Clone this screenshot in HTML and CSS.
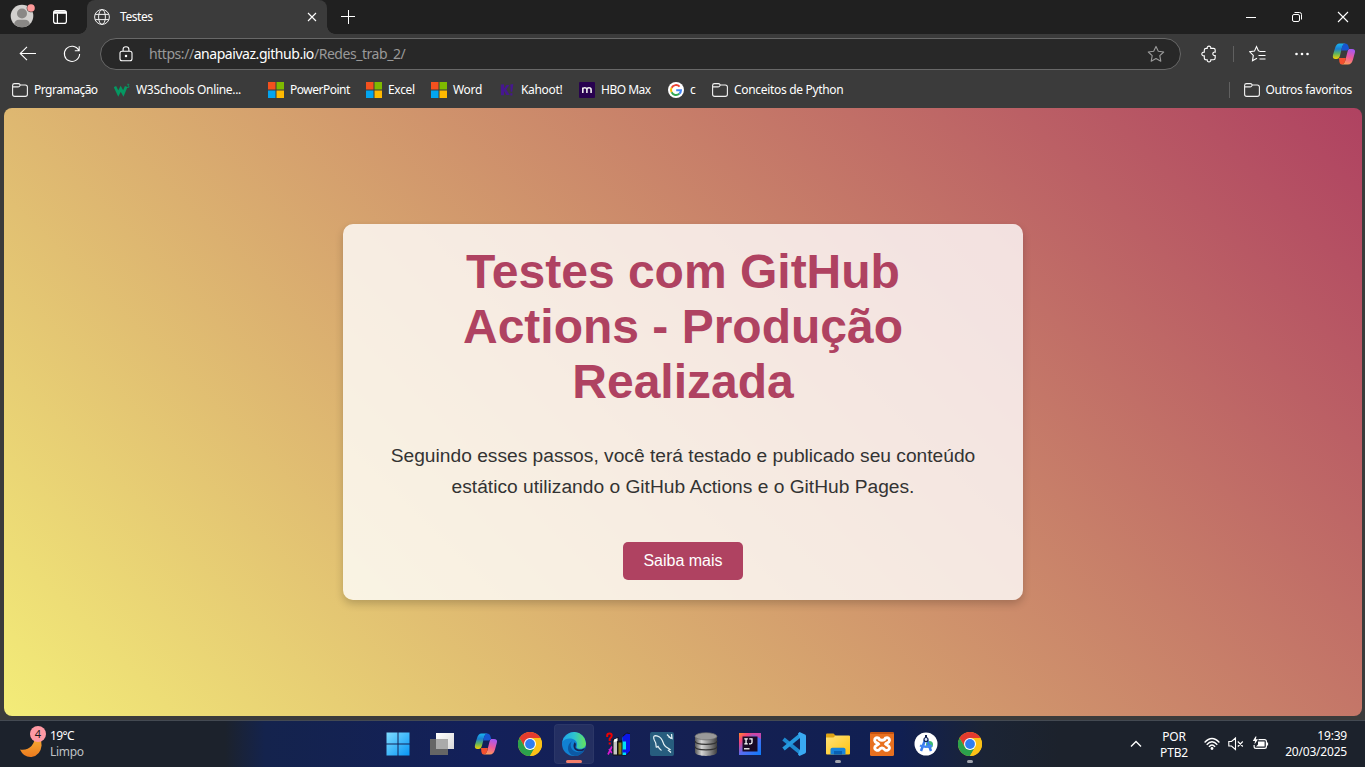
FILE: index.html
```html
<!DOCTYPE html>
<html lang="pt-BR">
<head>
<meta charset="utf-8">
<title>Testes</title>
<link rel="stylesheet" href="styles.css">
</head>
<body>
<svg class="defs" width="0" height="0" aria-hidden="true">
  <defs>
    <linearGradient id="cpA" x1="0" y1="0" x2="0" y2="1"><stop offset="0" stop-color="#19b5f1"/><stop offset=".35" stop-color="#1c7fd0"/><stop offset=".65" stop-color="#5fb35e"/><stop offset="1" stop-color="#f5d000"/></linearGradient>
    <linearGradient id="cpB" x1=".6" y1="0" x2=".3" y2="1"><stop offset="0" stop-color="#a758f0"/><stop offset=".5" stop-color="#ee5a9a"/><stop offset="1" stop-color="#ff9d55"/></linearGradient>
    <linearGradient id="winG" x1="0" y1="0" x2="1" y2="1"><stop offset="0" stop-color="#7fdcff"/><stop offset="1" stop-color="#0796f5"/></linearGradient>
    <linearGradient id="edgeA" x1="0" y1=".3" x2="1" y2=".3"><stop offset="0" stop-color="#1fa5e8"/><stop offset=".5" stop-color="#2dc3d0"/><stop offset="1" stop-color="#65e35a"/></linearGradient>
    <linearGradient id="moonG" x1="0" y1="0" x2="0" y2="1"><stop offset="0" stop-color="#fbbd3c"/><stop offset="1" stop-color="#ec7a1e"/></linearGradient>
    <linearGradient id="dbG" x1="0" y1="0" x2="1" y2="0"><stop offset="0" stop-color="#555"/><stop offset=".3" stop-color="#d4d4d4"/><stop offset=".65" stop-color="#8d8d8d"/><stop offset="1" stop-color="#3f3f3f"/></linearGradient>
    <linearGradient id="ijG" x1="0" y1="0" x2="1" y2="1"><stop offset="0" stop-color="#ff8a2a"/><stop offset=".22" stop-color="#f4407c"/><stop offset=".5" stop-color="#5a6cf0"/><stop offset="1" stop-color="#087cfa"/></linearGradient>
    <linearGradient id="folG" x1="0" y1="0" x2="1" y2="1"><stop offset="0" stop-color="#ffe27a"/><stop offset="1" stop-color="#ffc30f"/></linearGradient>
    <linearGradient id="tvG" x1="0" y1="0" x2="1" y2="1"><stop offset="0" stop-color="#fff"/><stop offset="1" stop-color="#d9d9d9"/></linearGradient>
    <symbol id="folder" viewBox="0 0 16 16"><path d="M.6 4.200V3.500Q.6 1.600 2.500 1.600H6.400Q7.300 1.600 7.900 2.400L8.400 3H13.300Q15.400 3 15.400 5.100V12.200Q15.400 14.400 13.200 14.400H2.800Q.6 14.400.6 12.200V4.900H6Q6.900 4.900 7.400 4.300L8.400 3" fill="none" stroke="#f2f2f2" stroke-width="1.100"/></symbol>
    <symbol id="tiles" viewBox="0 0 16 16"><path fill="#f4511e" d="M0 0h7.500v7.500H0z"/><path fill="#7fba00" d="M8.500 0H16v7.500H8.500z"/><path fill="#03a5f0" d="M0 8.500h7.500V16H0z"/><path fill="#ffb901" d="M8.500 8.500H16V16H8.500z"/></symbol>
    <symbol id="copilot" viewBox="0 0 24 24"><path fill="url(#cpB)" d="M17 7H20Q23.800 7 22.900 10.500L21 17.500Q19.600 22.500 16 22.500H9.500Q12.300 22 13.300 18.500L15.300 10.500Q16 7 17 7Z"/><path fill="#f4502e" d="M7 16H13.900L13.300 18.500Q12.300 22.500 9.500 22.500 8 22.500 7.400 20Z"/><path fill="url(#cpA)" d="M7.500 1.500H13.500Q11 2 10 5.500L8 13.500Q7.200 17 4.500 17H3.500Q.1 17 1 13L2.900 6.500Q4.300 1.500 7.500 1.500Z"/><path fill="#1754d0" d="M13 1.500Q15.800 1.500 16.500 4.500L17.200 7Q15.800 7 15.400 8.500H9.300L10 5.500Q11 1.500 13 1.500Z"/></symbol>
    <symbol id="chrome" viewBox="0 0 24 24"><circle cx="12" cy="12" r="12" fill="#fbc116"/><path fill="#e33b2e" d="M1.600 6A12 12 0 0 1 22.400 6H12L6.800 15Z"/><path fill="#2ba24c" d="M1.600 6A12 12 0 0 0 12 24L17.200 15 12 18 6.800 15Z"/><path fill="#fbc116" d="M22.400 6A12 12 0 0 1 12 24L17.200 15 18 12 12 6Z"/><circle cx="12" cy="12" r="6" fill="#fff"/><circle cx="12" cy="12" r="4.900" fill="#2f7df0"/></symbol>
  </defs>
</svg>
<div class="screen">
  <header class="tabstrip">
    <svg class="avatar" width="26" height="26" viewBox="0 0 26 26"><circle cx="12" cy="13" r="11.300" fill="#d2d0ce"/><circle cx="12" cy="10.500" r="5" fill="#8a8886"/><path d="M4.200 21.200Q4.600 16.700 9 16.700H15Q19.400 16.700 19.800 21.200A11.300 11.300 0 0 1 4.200 21.200Z" fill="#8a8886"/><circle cx="21" cy="5" r="4.300" fill="#202020"/><circle cx="21" cy="5" r="3.800" fill="#ff9a9a"/></svg>
    <svg class="workspace" width="14" height="14" viewBox="0 0 14 14" fill="none" stroke="#fff" stroke-width="1.200"><rect x=".6" y=".6" width="12.800" height="12.800" rx="2.200"/><path d="M1 2.500H13" stroke-width="2.600"/><path d="M4.400 4V13"/></svg>
    <div class="tab">
      <svg width="16" height="16" viewBox="0 0 16 16" fill="none" stroke="#f2f2f2"><circle cx="8" cy="8" r="7.400"/><ellipse cx="8" cy="8" rx="3.400" ry="7.400"/><path d="M1.200 5.400H14.800M1.200 10.600H14.800"/></svg>
      <span class="tab-title">Testes</span>
      <svg width="10" height="10" viewBox="0 0 10 10" fill="none" stroke="#fff" stroke-width="1.100"><path d="M1 1 9 9M9 1 1 9"/></svg>
    </div>
    <svg class="plus" width="14" height="14" viewBox="0 0 14 14" stroke="#fff"><path d="M7.500 0V14M0 6.500H14"/></svg>
    <div class="winbtns">
      <svg width="12" height="12" viewBox="0 0 12 12" stroke="#fff"><path d="M1 6.500H11"/></svg>
      <svg width="12" height="12" viewBox="0 0 12 12" fill="none" stroke="#fff"><rect x="1.500" y="3.500" width="7" height="7" rx="1.500"/><path d="M3.500 1.500H8.500Q10.500 1.500 10.500 3.500V8.500"/></svg>
      <svg width="12" height="12" viewBox="0 0 12 12" fill="none" stroke="#fff" stroke-width="1.100"><path d="M1 1 11 11M11 1 1 11"/></svg>
    </div>
  </header>
  <div class="toolbar">
    <svg class="back" width="18" height="16" viewBox="0 0 18 16" fill="none" stroke="#fff" stroke-width="1.100"><path d="M17 7.500H1.200M8 .8 1.200 7.500 8 14.200"/></svg>
    <svg class="reload" width="18" height="18" viewBox="0 0 18 18" fill="none" stroke="#fff" stroke-width="1.100"><path d="M15.700 5.200A7.600 7.600 0 1 0 16.600 9M16.200 1.300V5.700H11.800"/></svg>
    <div class="address">
      <svg width="14" height="16" viewBox="0 0 14 16" fill="none" stroke="#fff" stroke-width="1.100"><rect x="1" y="5.200" width="12" height="9.600" rx="2"/><path d="M4.100 5V3.400Q4.100.8 7 .8T9.900 3.400V5"/><circle cx="7" cy="10" r=".7" fill="#fff"/></svg>
      <span class="url">https://<b>anapaivaz.github.io</b>/Redes_trab_2/</span>
      <svg width="18" height="18" viewBox="0 0 18 18" fill="none" stroke="#9b9b9b" stroke-width="1.100"><path d="M9 1.400 11.300 6.300 16.700 7 12.800 10.700 13.800 16.200 9 13.500 4.200 16.200 5.200 10.700 1.300 7 6.700 6.300Z" stroke-linejoin="round"/></svg>
    </div>
    <div class="tools">
      <svg width="18" height="18" viewBox="0 0 18 18" fill="none" stroke="#fff" stroke-width="1.100"><path d="M6.300 3.400H7.200C6.800.3 11.200.3 10.800 3.400H13.500Q15.200 3.400 15.200 5V7.100C12 6.500 12 11.100 15.200 10.600V13Q15.200 14.700 13.500 14.700H10.800C11.200 17.700 6.800 17.700 7.200 14.700H6Q4.300 14.700 4.300 13V10.800C1 11.200 1 6.800 4.300 7.100V5Q4.300 3.400 6.300 3.400Z"/></svg>
      <i class="divider"></i>
      <svg width="18" height="18" viewBox="0 0 18 18" fill="none" stroke="#fff" stroke-width="1.100"><path d="M10.500 6 9.400 5.800 7.500 1.600 5.500 6.100.8 6.800 4.300 10.400 3.500 15.800 8 13.200M10.500 6.500H16.500M9.500 10.500H16.500M10.500 14H16.500"/></svg>
      <svg width="16" height="16" viewBox="0 0 16 16" fill="#fff"><circle cx="2.500" cy="8" r="1.300"/><circle cx="8" cy="8" r="1.300"/><circle cx="13.500" cy="8" r="1.300"/></svg>
      <svg width="24" height="24"><use href="#copilot"/></svg>
    </div>
  </div>
  <nav class="bookmarks">
    <div class="bm"><svg><use href="#folder"/></svg><span class="tight">Prgramação</span></div>
    <div class="bm"><svg viewBox="0 0 16 16" fill="none" stroke="#059862"><path d="M.9 4.500 4.300 11.500 6.700 6.800 9.300 11.500 12.200 4.500" stroke-width="2.800"/><path d="M13.200 2.300H15L14 3.700Q15.600 4 14.800 5.300L13.100 5.500" stroke-width=".9"/></svg><span>W3Schools Online...</span></div>
    <div class="bm"><svg><use href="#tiles"/></svg><span class="tight">PowerPoint</span></div>
    <div class="bm"><svg><use href="#tiles"/></svg><span>Excel</span></div>
    <div class="bm"><svg><use href="#tiles"/></svg><span>Word</span></div>
    <div class="bm"><svg viewBox="0 0 16 16" fill="#46178f"><path d="M1.800 2.500 5 2.300V6.600L7.600 3H10.300L7.200 7.500 10.800 13H7.400L5 9V13.200H2ZM11.300 2.500 14.300 2 13.200 9.700H11.700ZM11.300 11.200H13.400V13.500H11.300Z"/></svg><span>Kahoot!</span></div>
    <div class="bm"><svg viewBox="0 0 16 16"><rect width="16" height="16" rx="1" fill="#28024f"/><path d="M3.800 11V5.500M3.800 7.500Q3.800 5.700 5.800 5.700T7.900 7.700V11M7.900 7.700Q7.900 5.700 10 5.700T12.100 7.700V11" fill="none" stroke="#eee" stroke-width="1.600"/></svg><span class="tight">HBO Max</span></div>
    <div class="bm"><svg viewBox="0 0 16 16" fill="none" stroke-width="2"><circle cx="8" cy="8" r="8" fill="#fff"/><path stroke="#ea4335" d="M3.600 5.700A5 5 0 0 1 11.600 4.600"/><path stroke="#fbbc05" d="M3.600 5.700A5 5 0 0 0 3.600 10.300"/><path stroke="#34a853" d="M3.600 10.300A5 5 0 0 0 11.300 11.800"/><path stroke="#4285f4" d="M11.300 11.800A5 5 0 0 0 13 8.200H8.200"/></svg><span>c</span></div>
    <div class="bm"><svg><use href="#folder"/></svg><span>Conceitos de Python</span></div>
    <div class="bm others"><i class="divider"></i><svg><use href="#folder"/></svg><span>Outros favoritos</span></div>
  </nav>
  <main class="page">
    <section class="card">
      <h1>Testes com GitHub Actions - Produção Realizada</h1>
      <p>Seguindo esses passos, você terá testado e publicado seu conteúdo estático utilizando o GitHub Actions e o GitHub Pages.</p>
      <a class="more">Saiba mais</a>
    </section>
  </main>
  <footer class="taskbar">
    <div class="weather">
      <svg width="28" height="30" viewBox="0 0 28 30"><path d="M1 20.500Q8.500 21.500 12.500 17 17 12 15.500 3 23 8 22.600 16.500 21.500 26.500 12.500 28 4.500 28.500 1 20.500Z" fill="url(#moonG)"/></svg>
      <span class="badge">4</span>
      <div class="wtext"><span class="temp">19°C</span><span class="cond">Limpo</span></div>
    </div>
    <div class="apps">
      <div class="app"><svg viewBox="0 0 24 24"><path fill="url(#winG)" d="M.5.5H11.500V11.500H.5ZM12.500.5H23.500V11.500H12.500ZM.5 12.500H11.500V23.500H.5ZM12.500 12.500H23.500V23.500H12.500Z"/></svg></div>
      <div class="app"><svg viewBox="0 0 24 24"><path fill="url(#tvG)" d="M6 1H24V17H6Z"/><path fill="#656565" d="M0 7H18V23H0Z"/><path fill="#aaa" d="M6 7H18V17H6Z"/></svg></div>
      <div class="app"><svg><use href="#copilot"/></svg></div>
      <div class="app"><svg><use href="#chrome"/></svg></div>
      <div class="app active"><svg viewBox="0 0 24 24"><circle cx="12" cy="12" r="12" fill="#1181d2"/><path fill="url(#edgeA)" d="M.2 10A12 12 0 0 1 24 11.500C24 16 19.500 17.500 16 16.500 13.500 15.600 15.500 14.500 15 11.500 14 6 4.500 4.500.2 10Z"/><path fill="#0c59a4" d="M10.800 8.600C7.500 11 7.500 18.500 14.500 20 18 20.500 20.500 19.500 22.300 18 20 22 16.500 24 13 24 5 23 3.500 13 10.800 8.600Z"/><path fill="#142355" d="M12.500 10.300C15.500 12.500 12.500 14.500 14 16.200 16.500 18.300 20.500 17.600 23 16L22.400 18C17.500 21.500 8.500 18 12.500 10.300Z"/></svg><i class="bar"></i></div>
      <div class="app"><svg viewBox="0 0 24 24"><path d="M1.200 5V3.500Q1.200 1.500 3.500 1.500T5.700 3.700Q5.700 5 3.700 6.800V9" fill="none" stroke="#f00000" stroke-width="2"/><path fill="#f00000" d="M2.700 10.500H4.800V12.500H2.700Z"/><path d="M2 22.500 6 14.500M3 17 6 21" stroke="#d819cf" stroke-width="1.700"/><path fill="#111" d="M6.500 7.500 12.500 5V9L17 8V3.500L21 .5 24 1.500V20L20 23.500H7L6.500 22Z"/><path fill="#c5c5c5" d="M7.500 8.500H11V22.500H7.500Z"/><path fill="#fff" d="M8 7.500 11.500 6V9L8 10Z"/><path fill="#8a811a" d="M12.500 10.500H15.500V22.500H12.500Z"/><path fill="#00e1f5" d="M16.500 5.500H20V23H16.500Z"/><path fill="#0a16e8" d="M16.500 5 20.500 1.500 24 2V19L20 23V9.500H16.500ZM16.500 17.500H20V20.500H16.500Z"/></svg></div>
      <div class="app"><svg viewBox="0 0 24 24" fill="none" stroke="#e5f1f5"><rect width="24" height="24" rx="2" fill="#275d7e" stroke="none"/><path d="M6.300 15.500Q6.500 11 4.300 8 2.500 4 5.500 3.700 10 4 12.300 8.500 13.800 13 15.500 14.500L20 17.500 18.500 18.300 21 20.500M6.300 15.500 8 14.300Q9.500 17.500 11.500 18.500" stroke-width="1.200"/><path d="M17 2.500 21 6.500M21.500 2 22 6.500 18.500 5" stroke-width="1.300"/></svg></div>
      <div class="app"><svg viewBox="0 0 24 24"><path fill="url(#dbG)" d="M1 4V20C1 25.200 23 25.200 23 20V4Z"/><path d="M1 9C1 13.500 23 13.500 23 9M1 14.500C1 19 23 19 23 14.500" fill="none" stroke="#333" stroke-width="1.300"/><ellipse cx="12" cy="4.300" rx="11" ry="3.600" fill="#999" stroke="#686868" stroke-width=".7"/></svg></div>
      <div class="app"><svg viewBox="0 0 24 24"><rect x="1" y="1" width="22" height="22" fill="url(#ijG)"/><path fill="#e83b98" d="M13 1H23V7L19 4.500Z" opacity=".75"/><rect x="4.500" y="4.500" width="15" height="15" fill="#180a24"/><path d="M6.300 6.800H9.800M8.050 6.800V11.800M6.300 11.800H9.800M11.300 6.800H14V10.300Q14 11.800 12.600 11.800H11" fill="none" stroke="#fff" stroke-width="1.300"/><path fill="#ddd" d="M6 16H11.500V17.500H6Z"/></svg></div>
      <div class="app"><svg viewBox="0 0 24 24"><path d="M1.500 7 18 20.500" stroke="#1e89d0" stroke-width="3.800"/><path d="M1.500 17 18 3.500" stroke="#2599df" stroke-width="3.800"/><path fill="#39a9f2" d="M17.500 0 23 2.600Q24 3 24 4.200V19.800Q24 21 23 21.500L17.500 24 16 22.500 18 17.200V6.800L16 1.500Z"/></svg></div>
      <div class="app"><svg viewBox="0 0 24 24"><path fill="#dea314" d="M0 2.500Q0 1.500 1 1.500H7.500L10 4V8H0Z"/><path fill="url(#folG)" d="M0 5.500H7.500L9.500 3.500H23Q24 3.500 24 4.500V21.500Q24 22.500 23 22.500H1Q0 22.500 0 21.500Z"/><path fill="#1784db" d="M4.500 22.500V17.500Q4.500 15.700 6.300 15.700H17.700Q19.500 15.700 19.500 17.500V22.500Z"/><path fill="#0961b4" d="M8 19H16V22.500H8Z"/></svg><i class="dot"></i></div>
      <div class="app"><svg viewBox="0 0 24 24"><rect width="24" height="24" rx="1.500" fill="#e8701f"/><path fill="#c65310" d="M1 0H23L24 2H0Z"/><path d="M8.500 6C6.500 5 4.500 6 4.700 8.500 5 11 7.500 10.500 8.500 12 7 13.500 4.500 13.500 4.700 16 5 18.500 7.500 18.800 9 18 10 16.500 11 16 12 16S14 16.500 15 18C16.500 18.800 19.300 18.500 19.500 16 19.500 13.500 17 13.500 15.700 12 16.500 10.500 19.300 11 19.500 8.500 19.500 6 17.500 5 15.500 6 14.500 9 9.500 9 8.500 6Z" fill="none" stroke="#fff" stroke-width="2.900"/></svg></div>
      <div class="app"><svg viewBox="0 0 24 24"><circle cx="12" cy="12" r="11.500" fill="#fff"/><circle cx="15.500" cy="12.500" r="3.500" fill="#3bba71"/><path d="M11.200 7.500 7 19M12.800 7.500 17 19" stroke="#3979ea" stroke-width="2.500"/><path d="M6 13.500Q12 16 18 13.500" fill="none" stroke="#4285f4" stroke-width="2.400"/><circle cx="12" cy="7.500" r="2" fill="#d8e5ff" stroke="#10204f" stroke-width="1.200"/><path d="M12 3V5.500" stroke="#10204f" stroke-width="2"/></svg></div>
      <div class="app"><svg><use href="#chrome"/></svg><i class="dot"></i></div>
    </div>
    <div class="tray">
      <svg width="12" height="8" viewBox="0 0 12 8" fill="none" stroke="#fff" stroke-width="1.400"><path d="M1 6.500 6 1.500 11 6.500"/></svg>
      <div class="lang"><span>POR</span><span>PTB2</span></div>
      <div class="status">
        <svg width="16" height="16" viewBox="0 0 16 16" fill="none" stroke="#fff" stroke-width="1.300"><path d="M.6 6.500Q8-1.500 15.400 6.500M2.700 8.700Q8 2.800 13.300 8.700M4.900 10.800Q8 7.200 11.100 10.800"/><circle cx="8" cy="12.500" r="1.400" fill="#fff" stroke="none"/></svg>
        <svg width="16" height="16" viewBox="0 0 16 16" fill="none" stroke="#fff" stroke-width="1.100"><path d="M.8 5.500H3.500L7.500 2V13.500L3.500 10H.8ZM9.800 5.500 14.800 10.500M14.800 5.500 9.800 10.500"/></svg>
        <svg width="17" height="16" viewBox="0 0 17 16" fill="none" stroke="#fff" stroke-width="1.200"><path d="M6.500 3.600H12.500Q14.400 3.600 14.400 5.500V10.500Q14.400 12.400 12.500 12.400H4Q2.100 12.400 2.100 10.500V9"/><path d="M6 5.500H12.600V10.500H4L6 8.500Z" fill="#fff" stroke="none"/><path d="M15.500 6.500V9.500"/><path d="M3.500.5H4.500L3.800 3.200H6L2.500 8.500 3 5H.8Z" fill="#fff" stroke="none"/></svg>
      </div>
      <div class="clock"><span>19:39</span><span>20/03/2025</span></div>
    </div>
  </footer>
</div>
</body>
</html>
```

FILE: styles.css
```css
* { box-sizing: border-box; }
body { margin: 0; font-family: "Noto Sans", "Open Sans", sans-serif; font-size: 12px; color: #fff; overflow: hidden; }
svg { display: block; flex: none; }
.defs { position: absolute; }
.screen { width: 1365px; height: 767px; display: flex; flex-direction: column; background: #3b3b3b; }
span { white-space: nowrap; }

.tabstrip { height: 34px; flex: none; display: flex; align-items: center; background: #202020; padding-left: 10px; }
.workspace { margin-left: 17px; }
.avatar { margin-top: -2px; }
.tab { position: relative; width: 240px; height: 34px; margin-left: 20px; padding: 0 10px 0 7px; display: flex; align-items: center; background: #3b3b3b; border-radius: 8px 8px 0 0; }
.tab::before, .tab::after { content: ""; position: absolute; bottom: 0; width: 8px; height: 8px; }
.tab::before { left: -8px; background: radial-gradient(circle at 0 0, #202020 7.5px, #3b3b3b 8px); }
.tab::after { right: -8px; background: radial-gradient(circle at 100% 0, #202020 7.5px, #3b3b3b 8px); }
.tab-title { flex: 1; margin-left: 10px; padding-bottom: 1px; letter-spacing: -.45px; }
.plus { margin-left: 14px; }
.winbtns { margin-left: auto; display: flex; gap: 34px; padding-right: 16px; }

.toolbar { height: 40px; flex: none; display: flex; align-items: center; padding-left: 19px; }
.reload { margin-left: 26px; }
.address { width: 1081px; height: 32px; margin-left: 19px; padding: 0 15px 0 18px; border: 1px solid #686868; border-radius: 16px; background: #282828; display: flex; align-items: center; }
.url { flex: 1; margin-left: 16px; padding-bottom: 1px; font-size: 14px; letter-spacing: -.45px; color: #999; }
.url b { font-weight: 400; color: #fff; }
.tools { display: flex; align-items: center; margin-left: 19px; }
.divider { width: 1px; height: 16px; background: #606060; }
.tools .divider { margin: 0 15px; }
.tools svg:nth-of-type(3) { margin: 0 22px 0 27px; }

.bookmarks { height: 34px; flex: none; display: grid; grid-template-columns: 102px 154px 98px 65px 68px 80px 89px 44px 1fr auto; align-items: center; padding: 0 13px 2px 12px; }
.bm { display: flex; align-items: center; gap: 6px; letter-spacing: -.32px; }
.bm svg { width: 16px; height: 16px; }
.bm span { padding-bottom: 1px; }
.bm .tight { letter-spacing: -.5px; }
.others .divider { margin-right: 8px; }

.page { flex: none; height: 608px; margin: 0 3px 0 4px; border-radius: 8px; display: flex; justify-content: center; align-items: center; background: linear-gradient(45deg, #f3ec78, #af4261); }
.card { width: 680px; height: 376px; padding: 20px 40px; border-radius: 10px; background: rgba(255, 255, 255, .8); box-shadow: 0 4px 8px rgba(0, 0, 0, .2); text-align: center; font-family: "Liberation Sans", Arial, sans-serif; }
.card h1 { margin: 0 0 32px; font-size: 48px; line-height: 55px; color: #af4261; }
.card p { margin: 0 0 40px; font-size: 19.2px; line-height: 30.72px; color: #333; }
.more { display: inline-block; padding: 10px 20px; border-radius: 5px; background: #af4261; font-size: 16px; line-height: 18px; }

.taskbar { position: relative; flex: none; height: 47px; margin-top: 4px; border-top: 1px solid #444a52; display: flex; align-items: center; background: linear-gradient(90deg, #1c222c 0, #1c222c 225px, #14234d 265px, #13205a 480px, #152052 700px, #101f52 900px, #1b2435 985px, #1c222c 1060px); }
.weather { position: relative; width: 358px; height: 46px; margin-right: 20px; padding-left: 19px; display: flex; align-items: center; }
.badge { position: absolute; left: 30px; top: 5px; width: 16px; height: 16px; border-radius: 8px; background: #ff99a4; color: #1b1b1b; text-align: center; line-height: 16px; font-size: 11px; }
.wtext { margin-left: 3px; display: grid; line-height: 16px; }
.cond { color: #bfc1c4; letter-spacing: -.3px; }
.temp { letter-spacing: -.6px; }
.apps { display: flex; gap: 4px; }
.app { position: relative; width: 40px; height: 40px; display: grid; place-items: center; }
.app svg { width: 24px; height: 24px; }
.active { background: rgba(255, 255, 255, .07); border-radius: 4px; box-shadow: inset 0 0 0 1px rgba(255, 255, 255, .04); }
.bar, .dot { position: absolute; bottom: 1px; left: 12px; width: 16px; height: 3px; border-radius: 2px; background: #f37e6b; }
.dot { left: 17px; width: 6px; background: #a0a3ad; }
.tray { margin-left: auto; display: flex; align-items: center; padding-right: 18px; }
.lang { width: 30px; margin-left: 17px; display: grid; justify-items: center; line-height: 16px; margin-top: 2px; letter-spacing: -.2px; }
.status { display: flex; gap: 8px; margin-left: 15px; }
.clock { width: 63px; margin-left: 15px; display: grid; justify-items: end; line-height: 16px; letter-spacing: -.2px; }
```
